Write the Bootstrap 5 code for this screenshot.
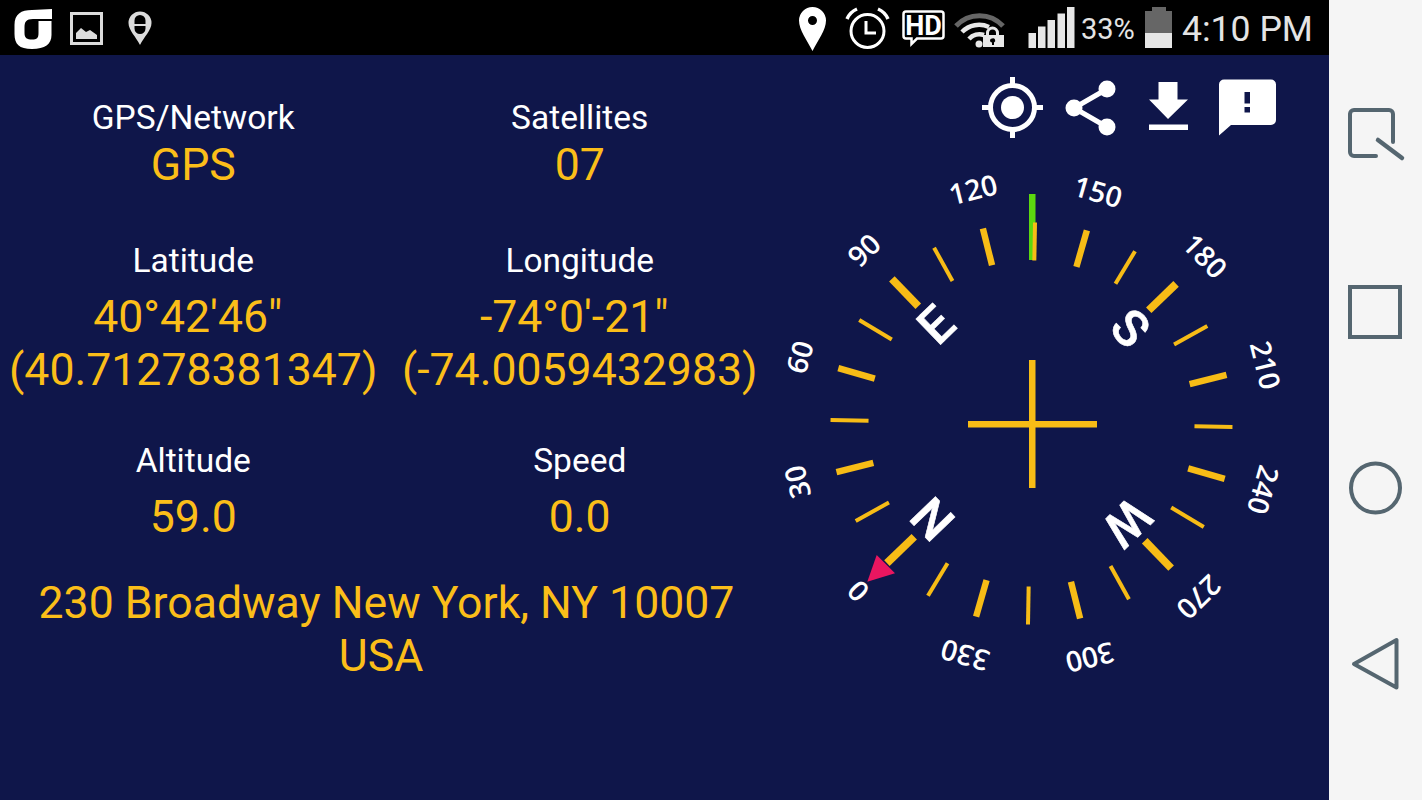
<!DOCTYPE html>
<html lang="en">
<head>
<meta charset="utf-8">
<title>GPS Compass</title>
<link href="https://cdn.jsdelivr.net/npm/bootstrap@5.3.0/dist/css/bootstrap.min.css" rel="stylesheet">
<style>
html,body{height:800px;overflow:hidden;background:#0f164a}
body{font-family:Roboto,"Liberation Sans",sans-serif}
.shell{width:1422px;height:800px}
.screen-area{width:1329px}
.status-strip{height:55px;background:#000;color:#e4e4e4}
.soft-keys{width:93px;background:#f5f5f5}
.app-body{height:745px;background:#0f164a}
.data-panel{width:773px;padding-top:44px}
.lbl{font-size:33.5px;line-height:38px;color:#fff}
.val{font-size:44.6px;line-height:53px;color:#fbbe19}
.val-first{line-height:56px}
.gap-a{margin-top:49px}
.gap-b{margin-top:10.5px}
.gap-c{margin-top:45.5px}
.gap-d{margin-top:33px}
.line-shift{display:inline-block;padding-right:11px}
.compass-panel{width:556px}
.tool-row{margin-top:22px;height:62px;padding-right:52px}
.gap-narrow{margin-right:19px}
.gap-wide{margin-right:29px}
.pct{font-size:29px;width:54px;margin:0 10px 0 4px;padding-top:4px}
.clock{font-size:35.6px;width:131px;margin:0 16px 0 10px;white-space:nowrap;padding-top:4px}
.mark-num{font-family:"Open Sans",Roboto,sans-serif;font-weight:600;font-size:28.5px;fill:#fff;text-anchor:middle}
.mark-dir{font-family:Roboto,sans-serif;font-weight:500;font-size:50px;fill:#fff;text-anchor:middle;stroke:#fff;stroke-width:.6}
.tick{stroke:#f7bc16}
.t1{stroke-width:4}
.t2{stroke-width:6.4}
.t3{stroke-width:7.8}
svg{display:block;flex:none}
</style>
</head>
<body class="m-0">
<div class="shell d-flex">
  <div class="screen-area d-flex flex-column">
    <div class="status-strip d-flex align-items-center justify-content-between">
      <div class="d-flex">
        <svg width="170" height="55" viewBox="0 0 170 55">
          <path d="M52 9V19H33C26 19 24.500 22 24.500 27V33C24.500 38 27 39.500 32 39.500S38.500 38 38.500 33V21H51.500V35C51.500 44 45 49 32 49S14.500 44 14.500 34V25C14.500 14 21 10 32 10Z" fill="#fff"/>
          <rect x="71.500" y="13.500" width="30" height="30" fill="none" stroke="#dcdcdc" stroke-width="3"/>
          <path d="M76 39V33L81 28 86 32 90 30 97 35V39Z" fill="#dcdcdc"/>
          <path d="M140 45C136 37 128.500 30 128.500 23A11.500 11.500 0 0 1 151.500 23C151.500 30 144 37 140 45Z" fill="#dcdcdc"/>
          <path d="M134.500 24V20.500A5.500 5.500 0 0 1 145.500 20.500V24ZM134.500 26H145.500V28.500A5.500 5.500 0 0 1 134.500 28.500Z" fill="#000" fill-rule="evenodd"/>
          <path d="M135 26H145V24H135Z" fill="#dcdcdc"/>
        </svg>
      </div>
      <div class="d-flex align-items-center">
        <svg width="280" height="55" viewBox="797 0 280 55">
          <path fill-rule="evenodd" d="M812.500 51C807 40 799 30 799 20.500A13.500 13.500 0 0 1 826 20.500C826 30 818 40 812.500 51ZM812.500 16A4.500 4.500 0 1 0 812.500 25 4.500 4.500 0 0 0 812.500 16Z" fill="#fff"/>
          <circle cx="867.500" cy="31" r="16.500" fill="none" stroke="#fff" stroke-width="3"/>
          <path d="M866 21V33H876" fill="none" stroke="#fff" stroke-width="3"/>
          <path d="M847 19A19 19 0 0 1 857 9M878 9A19 19 0 0 1 888 19" fill="none" stroke="#fff" stroke-width="3.500"/>
          <path d="M906 11.500H941A2.500 2.500 0 0 1 943.500 14V36A2.500 2.500 0 0 1 941 38.500H917L911.500 44V38.500H906A2.500 2.500 0 0 1 903.500 36V14A2.500 2.500 0 0 1 906 11.500Z" fill="none" stroke="#fff" stroke-width="2.500"/>
          <text x="923.500" y="34.500" text-anchor="middle" font-family="Roboto,sans-serif" font-weight="700" font-size="27" fill="#fff">HD</text>
          <path d="M956 26A32 32 0 0 1 1003 26" fill="none" stroke="#666" stroke-width="5"/>
          <path d="M962 32A24 24 0 0 1 989 27" fill="none" stroke="#e8e8e8" stroke-width="4.500"/>
          <path d="M969 39A14 14 0 0 1 984 35" fill="none" stroke="#e8e8e8" stroke-width="4.500"/>
          <circle cx="979" cy="44" r="3.500" fill="#e8e8e8"/>
          <path fill-rule="evenodd" d="M983 35H986V33A5 5 0 0 1 999 33V35H1004V47H983ZM989 35H996V33A3.500 3.500 0 0 0 989 33ZM992 38.500A2 2 0 0 0 992 42.500V45H994V42.500A2 2 0 0 0 992 38.500Z" fill="#e8e8e8"/>
          <g fill="#e6e6e6">
            <rect x="1028.500" y="33" width="7.500" height="15"/>
            <rect x="1038" y="26.500" width="7.500" height="21.500"/>
            <rect x="1047.500" y="20" width="7.500" height="28"/>
            <rect x="1057.500" y="13.500" width="7.500" height="34.500"/>
            <rect x="1067" y="7" width="7.500" height="41"/>
          </g>
        </svg>
        <span class="pct">33%</span>
        <svg width="27" height="55" viewBox="1145 0 27 55">
          <path d="M1152 7H1166V11H1172V33H1145V11H1152Z" fill="#666"/>
          <rect x="1145" y="33" width="27" height="15" fill="#e6e6e6"/>
        </svg>
        <span class="clock">4:10 PM</span>
      </div>
    </div>
    <div class="app-body d-flex">
      <div class="data-panel">
        <div class="row g-0 text-center">
          <div class="col-6"><div class="lbl">GPS/Network</div><div class="val val-first">GPS</div></div>
          <div class="col-6"><div class="lbl">Satellites</div><div class="val val-first">07</div></div>
        </div>
        <div class="row g-0 text-center gap-a">
          <div class="col-6"><div class="lbl">Latitude</div><div class="val gap-b"><span class="line-shift">40°42'46"</span><br>(40.71278381347)</div></div>
          <div class="col-6"><div class="lbl">Longitude</div><div class="val gap-b"><span class="line-shift">-74°0'-21"</span><br>(-74.0059432983)</div></div>
        </div>
        <div class="row g-0 text-center gap-c">
          <div class="col-6"><div class="lbl">Altitude</div><div class="val gap-b">59.0</div></div>
          <div class="col-6"><div class="lbl">Speed</div><div class="val gap-b">0.0</div></div>
        </div>
        <div class="val text-center gap-d">230 Broadway New York, NY 10007<br><span class="line-shift">USA</span></div>
      </div>
      <div class="compass-panel d-flex flex-column">
        <div class="tool-row d-flex justify-content-end">
          <svg class="gap-narrow" width="62" height="62" viewBox="982 77 62 62">
            <circle cx="1012.500" cy="107.500" r="22" fill="none" stroke="#fff" stroke-width="5"/>
            <circle cx="1012.500" cy="107.500" r="11.500" fill="#fff"/>
            <path d="M1012.500 77V88M1012.500 127V138M982 107.500H993M1032 107.500H1043" stroke="#fff" stroke-width="5"/>
          </svg>
          <svg class="gap-wide" width="56" height="62" viewBox="1063 77 56 62">
            <path d="M1107 89L1074 108 1107 127" fill="none" stroke="#fff" stroke-width="5"/>
            <circle cx="1107" cy="89" r="8.500" fill="#fff"/>
            <circle cx="1074" cy="108" r="8.500" fill="#fff"/>
            <circle cx="1107" cy="127" r="8.500" fill="#fff"/>
          </svg>
          <svg class="gap-wide" width="42" height="62" viewBox="1148 77 42 62">
            <path d="M1158.500 82H1177.500V99.500H1188L1168 119 1149 99.500H1158.500Z" fill="#fff"/>
            <rect x="1149" y="124.500" width="39" height="5.500" fill="#fff"/>
          </svg>
          <svg width="58" height="62" viewBox="1219 77 58 62">
            <path fill-rule="evenodd" d="M1224 79.500H1271A5 5 0 0 1 1276 84.500V120A5 5 0 0 1 1271 125H1231L1219 135.500V84.500A5 5 0 0 1 1224 79.500ZM1244.500 92V103.500H1250V92ZM1244.500 107V112.500H1250V107Z" fill="#fff"/>
          </svg>
        </div>
        <svg width="556" height="580" viewBox="773 139 556 580">
          <rect x="1029" y="194" width="6.500" height="66" fill="#5cd80f"/>
          <g transform="translate(1031.500 423.500)">
            <g class="tick">
              <line class="t3" y1="-163" y2="-201" transform="rotate(226)"/>
              <line class="t1" y1="-163" y2="-201" transform="rotate(241)"/>
              <line class="t2" y1="-163" y2="-201" transform="rotate(256)"/>
              <line class="t1" y1="-163" y2="-201" transform="rotate(271)"/>
              <line class="t2" y1="-163" y2="-201" transform="rotate(286)"/>
              <line class="t1" y1="-163" y2="-201" transform="rotate(301)"/>
              <line class="t3" y1="-163" y2="-201" transform="rotate(316)"/>
              <line class="t1" y1="-163" y2="-201" transform="rotate(331)"/>
              <line class="t2" y1="-163" y2="-201" transform="rotate(346)"/>
              <line class="t1" y1="-163" y2="-201" transform="rotate(1)"/>
              <line class="t2" y1="-163" y2="-201" transform="rotate(16)"/>
              <line class="t1" y1="-163" y2="-201" transform="rotate(31)"/>
              <line class="t3" y1="-163" y2="-201" transform="rotate(46)"/>
              <line class="t1" y1="-163" y2="-201" transform="rotate(61)"/>
              <line class="t2" y1="-163" y2="-201" transform="rotate(76)"/>
              <line class="t1" y1="-163" y2="-201" transform="rotate(91)"/>
              <line class="t2" y1="-163" y2="-201" transform="rotate(106)"/>
              <line class="t1" y1="-163" y2="-201" transform="rotate(121)"/>
              <line class="t3" y1="-163" y2="-201" transform="rotate(136)"/>
              <line class="t1" y1="-163" y2="-201" transform="rotate(151)"/>
              <line class="t2" y1="-163" y2="-201" transform="rotate(166)"/>
              <line class="t1" y1="-163" y2="-201" transform="rotate(181)"/>
              <line class="t2" y1="-163" y2="-201" transform="rotate(196)"/>
              <line class="t1" y1="-163" y2="-201" transform="rotate(211)"/>
            </g>
            <text class="mark-num" y="-241" dy=".36em" transform="rotate(226)">0</text>
            <text class="mark-num" y="-241" dy=".36em" transform="rotate(256)">30</text>
            <text class="mark-num" y="-241" dy=".36em" transform="rotate(286)">60</text>
            <text class="mark-num" y="-241" dy=".36em" transform="rotate(316)">90</text>
            <text class="mark-num" y="-241" dy=".36em" transform="rotate(346)">120</text>
            <text class="mark-num" y="-241" dy=".36em" transform="rotate(16)">150</text>
            <text class="mark-num" y="-241" dy=".36em" transform="rotate(46)">180</text>
            <text class="mark-num" y="-241" dy=".36em" transform="rotate(76)">210</text>
            <text class="mark-num" y="-241" dy=".36em" transform="rotate(106)">240</text>
            <text class="mark-num" y="-241" dy=".36em" transform="rotate(136)">270</text>
            <text class="mark-num" y="-241" dy=".36em" transform="rotate(166)">300</text>
            <text class="mark-num" y="-241" dy=".36em" transform="rotate(196)">330</text>
            <text class="mark-dir" y="-138" dy=".36em" transform="rotate(226)">N</text>
            <text class="mark-dir" y="-138" dy=".36em" transform="rotate(316)">E</text>
            <text class="mark-dir" y="-138" dy=".36em" transform="rotate(46)">S</text>
            <text class="mark-dir" y="-138" dy=".36em" transform="rotate(136)">W</text>
          </g>
          <path d="M876.700 555L895 573.300 867.300 581.700Z" fill="#ea1660"/>
          <rect x="1029" y="360" width="6.500" height="128" fill="#f7bc16"/>
          <rect x="968" y="421" width="129" height="6.500" fill="#f7bc16"/>
        </svg>
      </div>
    </div>
  </div>
  <div class="soft-keys">
    <svg width="93" height="800" viewBox="1329 0 93 800">
      <path d="M1376 156H1354A4 4 0 0 1 1350 152V114A4 4 0 0 1 1354 110H1389A4 4 0 0 1 1393 114V142" fill="none" stroke="#556670" stroke-width="4" stroke-linecap="round"/>
      <path d="M1378 140L1402 158" fill="none" stroke="#556670" stroke-width="4.500" stroke-linecap="round"/>
      <rect x="1350" y="287" width="50" height="50" fill="none" stroke="#556670" stroke-width="4"/>
      <circle cx="1375.500" cy="488" r="24.500" fill="none" stroke="#556670" stroke-width="4"/>
      <path d="M1396.500 640V687.500L1354 664Z" fill="none" stroke="#556670" stroke-width="4" stroke-linejoin="round"/>
    </svg>
  </div>
</div>
<script src="https://cdn.jsdelivr.net/npm/bootstrap@5.3.0/dist/js/bootstrap.bundle.min.js"></script>
</body>
</html>
